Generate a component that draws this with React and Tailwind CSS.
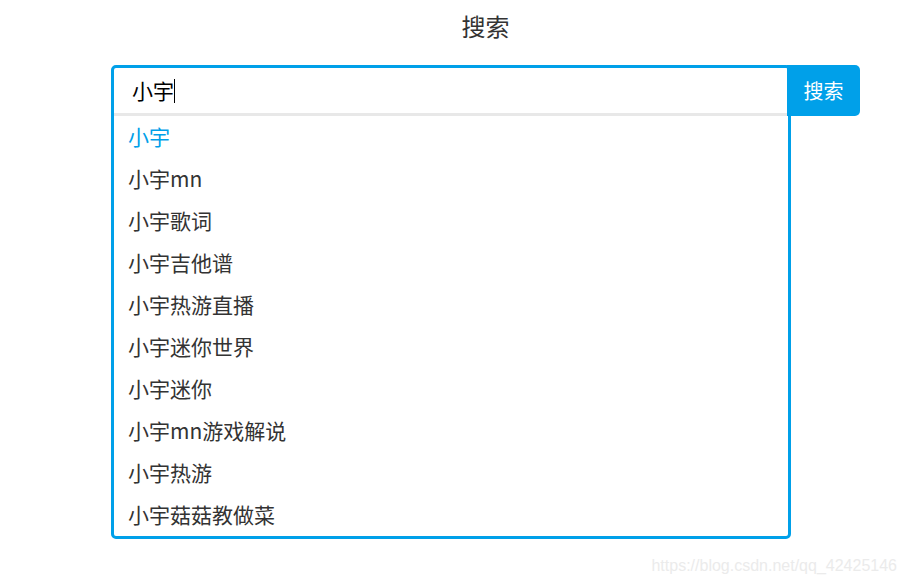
import React, { useState } from 'react'

const suggestions = [
  '小宇',
  '小宇mn',
  '小宇歌词',
  '小宇吉他谱',
  '小宇热游直播',
  '小宇迷你世界',
  '小宇迷你',
  '小宇mn游戏解说',
  '小宇热游',
  '小宇菇菇教做菜',
]

const font = "font-['Microsoft_YaHei','Noto_Sans_CJK_SC','Noto_Sans',sans-serif]"

const App = () => {
  const [active, setActive] = useState(0)

  return (
    <div className={`relative w-[906px] h-[586px] bg-white text-[#333] ${font}`}>
      <div className="ml-[111px] w-[749px]">
        {/* Title */}
        <h1 className="pt-[10px] text-center text-[24px] leading-[32px] font-normal">搜索</h1>

        {/* Search box */}
        <div className="flex items-start mt-[23px]">
          <div className="w-[681px] border-[3px] border-[#00a0e9] rounded-[5px] overflow-hidden">
            <div className="h-[48px] border-b-[3px] border-[#e8e8e8] flex items-center pl-[18px] text-[21px] text-black">
              <span>小宇</span>
              <span className="w-px h-[24px] bg-black" />
            </div>
            <ul>
              {suggestions.map((s, i) => (
                <li
                  key={s}
                  onMouseEnter={() => setActive(i)}
                  className={`h-[42px] flex items-center pl-[14px] text-[21px] cursor-pointer ${
                    i === active ? 'text-[#00a0e9]' : 'text-[#333]'
                  }`}
                >
                  {s}
                </li>
              ))}
            </ul>
          </div>
          <button className="-ml-[4px] w-[73px] h-[51px] bg-[#00a0e9] text-white text-[20px] rounded-r-[5px]">
            搜索
          </button>
        </div>
      </div>

      {/* watermark */}
      <div className="absolute right-[9px] bottom-[8px] text-[16px] text-[#ebebeb] font-['Liberation_Sans',sans-serif]">
        https://blog.csdn.net/qq_42425146
      </div>
    </div>
  )
}

export default App
